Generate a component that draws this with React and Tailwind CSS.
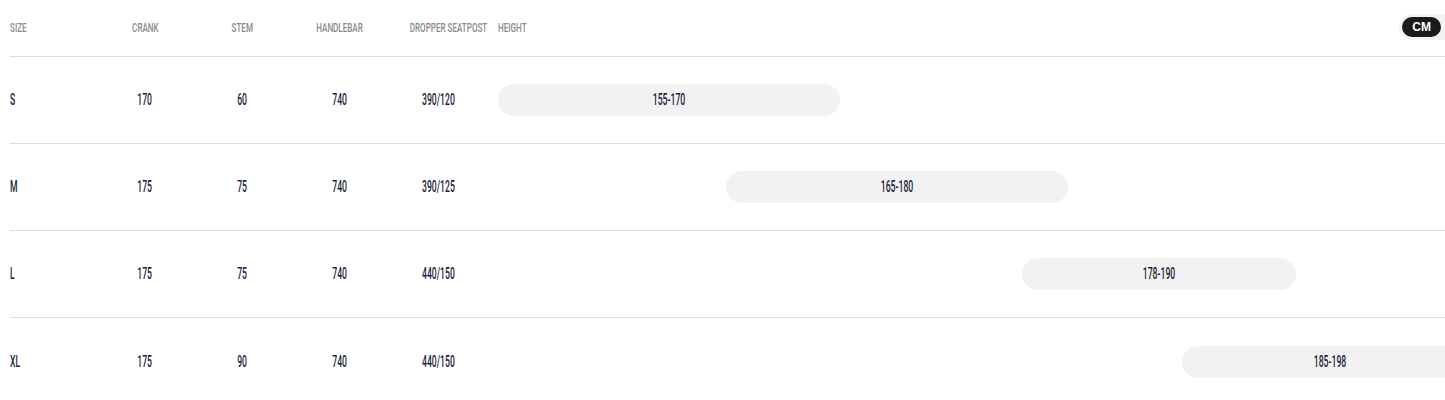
const rows = [
  { size: "S", crank: 170, stem: 60, bar: 740, dropper: "390/120", min: 155, max: 170 },
  { size: "M", crank: 175, stem: 75, bar: 740, dropper: "390/125", min: 165, max: 180 },
  { size: "L", crank: 175, stem: 75, bar: 740, dropper: "440/150", min: 178, max: 190 },
  { size: "XL", crank: 175, stem: 90, bar: 740, dropper: "440/150", min: 185, max: 198 },
];

// px per cm on the height scale, starting at 155
const SCALE = 22.8;
const BASE = 155;

function Narrow({ children, className = "" }) {
  return <span className={"inline-block whitespace-nowrap " + className}>{children}</span>;
}

export default function App() {
  const font = { fontFamily: '"Roboto", "Liberation Sans", sans-serif' };
  return (
    <div className="w-[1445px] h-[400px] overflow-hidden bg-white" style={font}>
      <div className="ml-[10px]">
        {/* header */}
        <div className="flex items-center h-[57px] border-b border-[#dcdcdc] text-[13px] font-medium text-[#8a8a8a] uppercase">
          <div className="w-[90px] shrink-0">
            <Narrow className="scale-x-[0.62] origin-left">Size</Narrow>
          </div>
          <div className="w-[90px] shrink-0 text-center"><Narrow className="scale-x-[0.62]">Crank</Narrow></div>
          <div className="w-[104px] shrink-0 text-center"><Narrow className="scale-x-[0.62]">Stem</Narrow></div>
          <div className="w-[92px] shrink-0 text-center"><Narrow className="scale-x-[0.62]">Handlebar</Narrow></div>
          <div className="w-[104px] shrink-0 text-center"><Narrow className="scale-x-[0.62]">Dropper Seatpost</Narrow></div>
          <div className="ml-[8px] flex-1 min-w-0">
            <Narrow className="scale-x-[0.62] origin-left">Height</Narrow>
          </div>
          <div className="flex items-center bg-[#f2f2f2] rounded-l-full pl-[3px] pr-[4px] py-[3px] mb-[2px]">
            <span
              className="bg-[#1a1a1a] text-white rounded-full px-[10px] h-[20px] flex items-center text-[12px] font-bold"
              style={{ fontFamily: '"Liberation Sans", Arial, sans-serif' }}
            >
              CM
            </span>
          </div>
        </div>

        {/* rows */}
        {rows.map((r, i) => (
          <div
            key={r.size}
            className={
              "flex items-center h-[87px] text-[16px] font-medium text-[#1c1c38] " +
              (i < rows.length - 1 ? "border-b border-[#dcdcdc]" : "")
            }
          >
            <div className="w-[90px] shrink-0">
              <Narrow className="scale-x-[0.54] origin-left">{r.size}</Narrow>
            </div>
            <div className="w-[90px] shrink-0 text-center"><Narrow className="scale-x-[0.54]">{r.crank}</Narrow></div>
            <div className="w-[104px] shrink-0 text-center"><Narrow className="scale-x-[0.54]">{r.stem}</Narrow></div>
            <div className="w-[92px] shrink-0 text-center"><Narrow className="scale-x-[0.54]">{r.bar}</Narrow></div>
            <div className="w-[104px] shrink-0 text-center"><Narrow className="scale-x-[0.54]">{r.dropper}</Narrow></div>
            <div className="ml-[8px] flex-1 min-w-0 relative h-[32px]">
              <div
                className="absolute top-0 h-[32px] rounded-full bg-[#f2f2f2] flex items-center justify-center"
                style={{ left: (r.min - BASE) * SCALE, width: (r.max - r.min) * SCALE }}
              >
                <Narrow className="scale-x-[0.54]">{r.min}-{r.max}</Narrow>
              </div>
            </div>
          </div>
        ))}
      </div>
    </div>
  );
}
